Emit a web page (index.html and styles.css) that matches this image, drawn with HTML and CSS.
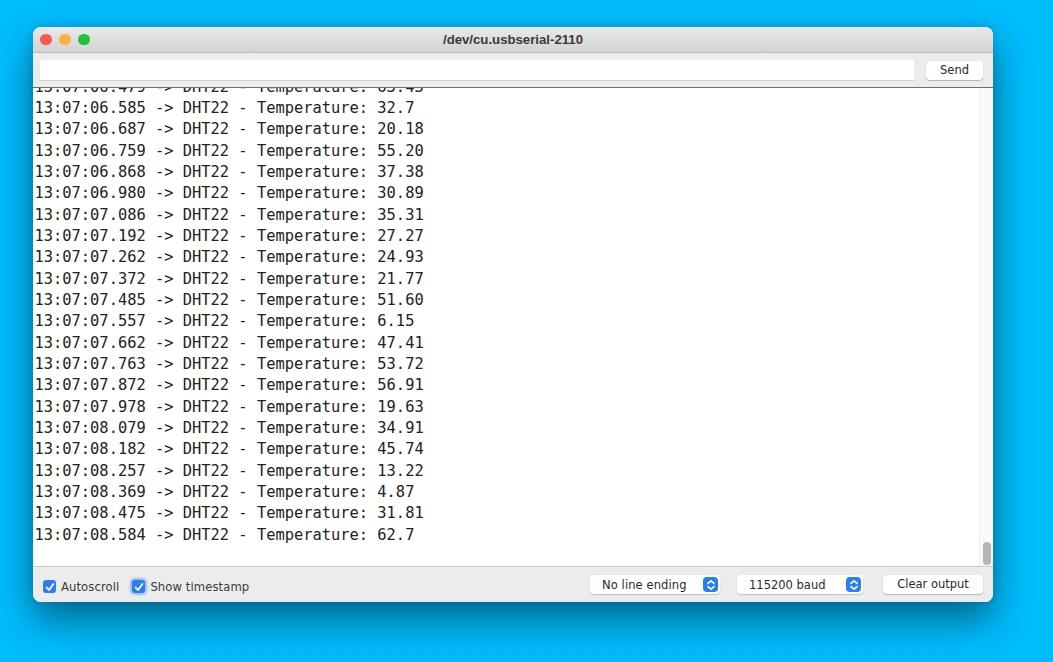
FILE: index.html
```html
<!DOCTYPE html>
<html lang="en">
<head>
<meta charset="utf-8">
<title>/dev/cu.usbserial-2110</title>
<link rel="stylesheet" href="styles.css">
</head>
<body>
<main class="window">
  <header class="titlebar">
    <div class="lights"><i class="light red"></i><i class="light yellow"></i><i class="light green"></i></div>
    <h1 class="title">/dev/cu.usbserial-2110</h1>
  </header>
  <div class="sendbar">
    <div class="input"></div>
    <button class="btn send">Send</button>
  </div>
  <div class="output">
    <div class="log">
      <div>13:07:06.479 -&gt; DHT22 - Temperature: 63.43</div>
      <div>13:07:06.585 -&gt; DHT22 - Temperature: 32.7</div>
      <div>13:07:06.687 -&gt; DHT22 - Temperature: 20.18</div>
      <div>13:07:06.759 -&gt; DHT22 - Temperature: 55.20</div>
      <div>13:07:06.868 -&gt; DHT22 - Temperature: 37.38</div>
      <div>13:07:06.980 -&gt; DHT22 - Temperature: 30.89</div>
      <div>13:07:07.086 -&gt; DHT22 - Temperature: 35.31</div>
      <div>13:07:07.192 -&gt; DHT22 - Temperature: 27.27</div>
      <div>13:07:07.262 -&gt; DHT22 - Temperature: 24.93</div>
      <div>13:07:07.372 -&gt; DHT22 - Temperature: 21.77</div>
      <div>13:07:07.485 -&gt; DHT22 - Temperature: 51.60</div>
      <div>13:07:07.557 -&gt; DHT22 - Temperature: 6.15</div>
      <div>13:07:07.662 -&gt; DHT22 - Temperature: 47.41</div>
      <div>13:07:07.763 -&gt; DHT22 - Temperature: 53.72</div>
      <div>13:07:07.872 -&gt; DHT22 - Temperature: 56.91</div>
      <div>13:07:07.978 -&gt; DHT22 - Temperature: 19.63</div>
      <div>13:07:08.079 -&gt; DHT22 - Temperature: 34.91</div>
      <div>13:07:08.182 -&gt; DHT22 - Temperature: 45.74</div>
      <div>13:07:08.257 -&gt; DHT22 - Temperature: 13.22</div>
      <div>13:07:08.369 -&gt; DHT22 - Temperature: 4.87</div>
      <div>13:07:08.475 -&gt; DHT22 - Temperature: 31.81</div>
      <div>13:07:08.584 -&gt; DHT22 - Temperature: 62.7</div>
    </div>
    <div class="scrollbar"><div class="thumb"></div></div>
  </div>
  <footer class="footer">
    <label class="check">
      <span class="box"><svg viewBox="0 0 12 12" width="12" height="12"><path d="M2.6 6.4 5 9l4.4-6" fill="none" stroke="#fff" stroke-width="1.8" stroke-linecap="round" stroke-linejoin="round"/></svg></span>
      Autoscroll
    </label>
    <label class="check">
      <span class="box focus"><svg viewBox="0 0 12 12" width="12" height="12"><path d="M2.6 6.4 5 9l4.4-6" fill="none" stroke="#fff" stroke-width="1.8" stroke-linecap="round" stroke-linejoin="round"/></svg></span>
      Show timestamp
    </label>
    <div class="spacer"></div>
    <div class="select ending">
      <span class="label">No line ending</span>
      <span class="stepper"><svg viewBox="0 0 14 14" width="14" height="14"><path d="M4 5.4 7 2.8l3 2.6M4 8.6l3 2.6 3-2.6" fill="none" stroke="#fff" stroke-width="1.6" stroke-linecap="round" stroke-linejoin="round"/></svg></span>
    </div>
    <div class="select baud">
      <span class="label">115200 baud</span>
      <span class="stepper"><svg viewBox="0 0 14 14" width="14" height="14"><path d="M4 5.4 7 2.8l3 2.6M4 8.6l3 2.6 3-2.6" fill="none" stroke="#fff" stroke-width="1.6" stroke-linecap="round" stroke-linejoin="round"/></svg></span>
    </div>
    <button class="btn clear">Clear output</button>
  </footer>
</main>
</body>
</html>
```
FILE: styles.css
```css
* { box-sizing: border-box; }
html, body { height: 100%; }
body {
  margin: 0;
  padding: 27px 60px 60px 33px;
  background: #00bcfd;
  overflow: hidden;
  font-family: "DejaVu Sans", sans-serif;
  color: #2a2a2a;
}
.window {
  width: 960px;
  height: 575px;
  display: flex;
  flex-direction: column;
  border-radius: 8px;
  overflow: hidden;
  background: #ececec;
  box-shadow: 0 18px 38px rgba(0, 0, 0, 0.45), 0 0 10px rgba(0, 0, 0, 0.12);
}
.titlebar {
  height: 26px;
  flex: none;
  display: flex;
  align-items: center;
  position: relative;
  background: linear-gradient(#e9e9e9, #d3d3d3);
  border-bottom: 1px solid #b9b9b9;
}
.lights { display: flex; gap: 7.5px; padding-left: 7px; }
.light { width: 11.5px; height: 11.5px; border-radius: 50%; display: block; }
.red { background: #fc5753; }
.yellow { background: #fdb13c; }
.green { background: #1fc23c; }
.title {
  position: absolute;
  inset: 0;
  margin: 0;
  text-align: center;
  font: bold 13.2px/26px "Liberation Sans", sans-serif;
  color: #3a3a3a;
}
.sendbar {
  height: 35px;
  flex: none;
  display: flex;
  align-items: flex-start;
  padding: 7px 10px 0 7px;
  gap: 12px;
  background: #ececec;
  border-bottom: 1px solid #6e6e6e;
}
.input {
  flex: 1;
  height: 21px;
  background: #fff;
  border-bottom: 1px solid #d0d0d0;
}
.btn {
  height: 19px;
  padding: 0;
  border: 0;
  border-radius: 4px;
  background: #fff;
  box-shadow: 0 1px 1px rgba(0, 0, 0, 0.22), 0 0 1px rgba(0, 0, 0, 0.12);
  font: 11.5px/19px "DejaVu Sans", sans-serif;
  color: #2a2a2a;
}
.send { width: 57px; margin-top: 1px; }
.output {
  flex: 1;
  min-height: 0;
  display: flex;
  background: #fff;
  overflow: hidden;
  border-bottom: 1px solid #c9c9c9;
}
.log {
  flex: 1;
  margin-top: -11.4px;
  padding-left: 1.5px;
  font: 15.4px/21.35px "DejaVu Sans Mono", monospace;
  color: #222;
  white-space: nowrap;
}
.scrollbar {
  width: 14px;
  flex: none;
  display: flex;
  align-items: flex-end;
  justify-content: center;
  padding-bottom: 1px;
  background: #fafafa;
  border-left: 1px solid #efefef;
}
.thumb { width: 8px; height: 23px; border-radius: 4px; background: #b5b5b5; }
.footer {
  height: 35px;
  flex: none;
  display: flex;
  align-items: center;
  padding: 0 10px 0 10px;
  font-size: 11.5px;
  background: #ececec;
}
.check {
  display: flex;
  align-items: center;
  gap: 5px;
  margin: 4px 13px 0 0;
  font-size: 11.6px;
  letter-spacing: 0.1px;
  color: #3a3a3a;
}
.box {
  width: 13px;
  height: 13px;
  border-radius: 3px;
  background: #2a7ff0;
  display: flex;
  align-items: center;
  justify-content: center;
}
.box.focus { box-shadow: 0 0 2px 2px rgba(70, 140, 240, 0.5); }
.spacer { flex: 1; }
.select {
  height: 19px;
  display: flex;
  align-items: center;
  justify-content: space-between;
  background: #fff;
  border-radius: 4px;
  padding: 0 2px 0 12px;
  box-shadow: 0 1px 1px rgba(0, 0, 0, 0.18), 0 0 1px rgba(0, 0, 0, 0.12);
  color: #2a2a2a;
}
.ending { width: 130px; margin-right: 17px; letter-spacing: 0.1px; }
.baud { width: 126px; margin-right: 20px; }
.stepper {
  width: 15px;
  height: 15px;
  border-radius: 4px;
  background: #2a7ff0;
  display: flex;
  align-items: center;
  justify-content: center;
}
.clear { width: 100px; }
```
